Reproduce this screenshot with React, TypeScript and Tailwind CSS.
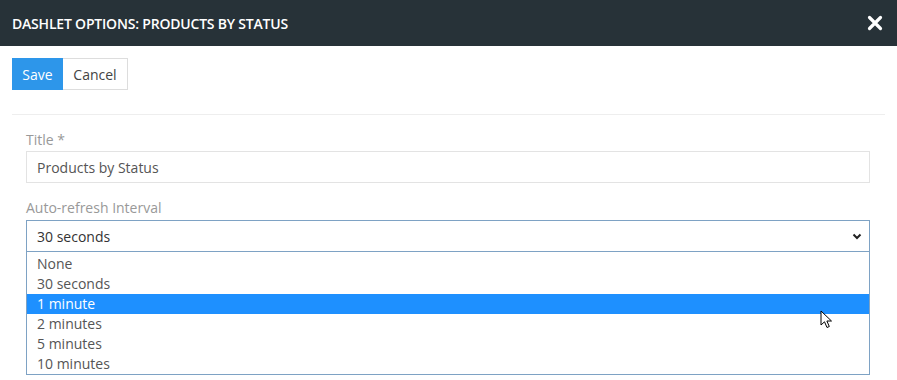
import { useState } from "react"

const options = ["None", "30 seconds", "1 minute", "2 minutes", "5 minutes", "10 minutes"]

function CloseIcon() {
  return (
    <svg width="16" height="16" viewBox="0 0 16 16" className="block">
      <path d="M2.5 2.5 L13.5 13.5 M13.5 2.5 L2.5 13.5" stroke="#fff" strokeWidth="3.2" strokeLinecap="round" />
    </svg>
  )
}

function Chevron() {
  return (
    <svg width="10" height="7" viewBox="0 0 10 7" className="block">
      <path d="M1.5 1.5 L5 5 L8.5 1.5" stroke="#222" strokeWidth="2" fill="none" />
    </svg>
  )
}

function Cursor() {
  return (
    <svg width="14" height="20" viewBox="0 0 14 20" className="block">
      <path d="M1 1 L1 15 L4.5 11.8 L7 17.5 L9.3 16.5 L6.9 11 L11.5 11 Z" fill="#fff" stroke="#000" strokeWidth="1" strokeLinejoin="round" />
    </svg>
  )
}

export default function App() {
  const [hovered, setHovered] = useState(2)

  return (
    <div className="w-[897px] h-[380px] bg-white overflow-hidden" style={{ fontFamily: '"Open Sans", "Liberation Sans", sans-serif' }}>
      <div className="h-[46px] bg-[#273238] flex items-center justify-between pl-3 pr-[14px]">
        <h1 className="text-[14px] font-semibold text-white tracking-[-0.2px]">DASHLET OPTIONS: PRODUCTS BY STATUS</h1>
        <button className="p-0"><CloseIcon /></button>
      </div>

      <div className="px-3 pt-3">
        <div className="flex">
          <button className="h-8 px-[10px] bg-[#2d96ea] text-white text-[14px] w-[51px]">Save</button>
          <button className="h-8 w-[65px] border border-[#dddddd] border-l-0 text-[#444] text-[14px]">Cancel</button>
        </div>

        <div className="mt-6 border-t border-[#eeeeee] pl-[14px] pr-[15px] pt-[15px]">
          <label className="block h-5 leading-5 text-[14px] text-[#999999] mb-[1px]">Title *</label>
          <div className="h-8 border border-[#e3e3e3] flex items-center px-[10px] text-[14px] text-[#555555]">Products by Status</div>

          <label className="block h-5 leading-5 text-[14px] text-[#999999] mt-[15px] mb-[2px]">Auto-refresh Interval</label>
          <div className="relative">
            <div className="h-8 border border-[#7ea2c4] flex items-center justify-between pl-[10px] pr-[7px] text-[14px] text-[#333333]">
              <span>30 seconds</span>
              <Chevron />
            </div>
            <ul className="border border-t-0 border-[#7ea2c4] pt-[2px]">
              {options.map((o, i) => (
                <li
                  key={o}
                  onMouseEnter={() => setHovered(i)}
                  className={
                    i === hovered
                      ? "h-5 leading-5 px-[10px] text-[14px] bg-[#1e90ff] text-white"
                      : "h-5 leading-5 px-[10px] text-[14px] text-[#555555]"
                  }
                >
                  {o}
                </li>
              ))}
            </ul>
            <div className="absolute left-[794px] top-[90px] pointer-events-none">
              <Cursor />
            </div>
          </div>
        </div>
      </div>
    </div>
  )
}
